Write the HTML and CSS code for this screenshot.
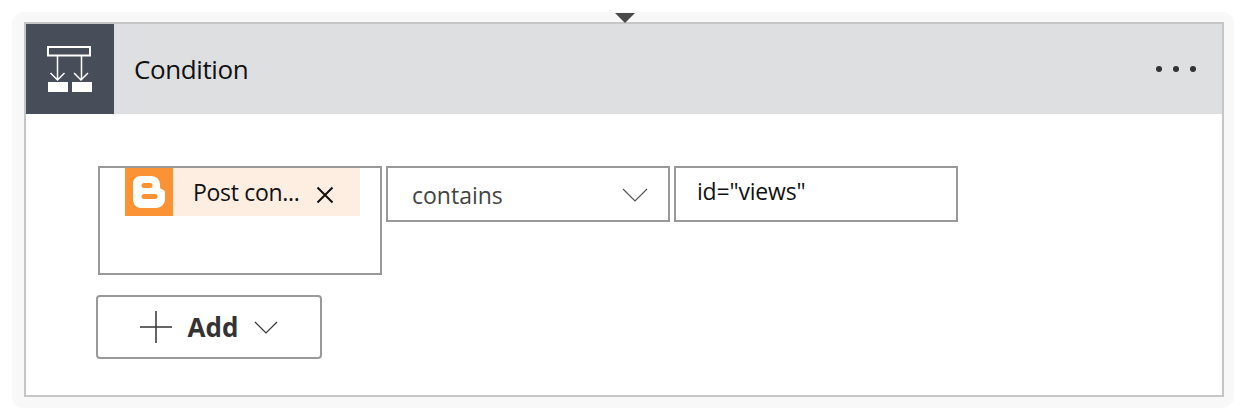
FILE: index.html
```html
<!DOCTYPE html>
<html lang="en">
<head>
  <title>Condition</title>
  <meta charset="utf-8">
  <link rel="stylesheet" href="styles.css">
</head>
<body>
  <div class="shell">
    <svg class="notch" width="22" height="10" viewBox="0 0 22 10"><path d="M0 0h20L10 10z" fill="#4a4a4a"/></svg>
    <section class="card">
      <header class="card-header">
        <div class="card-icon">
          <svg width="46" height="46" viewBox="0 0 46 46" fill="none" stroke="#fff" stroke-width="1.5">
            <rect x="1" y="1" width="42" height="8.5" stroke-width="2"/>
            <path d="M10.5 10v24M3.5 27l7 7 7-7M34.500 10v24M27 27l7 7 7-7"/>
            <path d="M1 36h20v10H1zM25 36h20v10H25z" fill="#fff" stroke="none"/>
          </svg>
        </div>
        <h2 class="card-title">Condition</h2>
        <div class="card-menu"><i></i><i></i><i></i></div>
      </header>
      <div class="card-body">
        <div class="condition">
          <div class="field field-token">
            <div class="token">
              <span class="token-icon">
                <svg width="34" height="34" viewBox="0 0 34 34">
                  <path d="M9 1h10c5.500 0 9 3.500 9 9v2c0 1.500 1 2 2.500 2.500 2 .5 2.500 1.500 2.500 3.500v6c0 5-4 9-9 9H9c-5 0-8-4-8-9V9c0-5 3-8 8-8z" fill="#fff"/>
                  <rect x="9.500" y="8" width="11" height="5" rx="2.500" fill="#fb9334"/>
                  <rect x="9.500" y="19" width="16" height="5" rx="2.500" fill="#fb9334"/>
                </svg>
              </span>
              <span class="token-label">Post con...</span>
              <svg class="token-close" width="18" height="18" viewBox="0 0 18 18"><path d="M1.500 1.500l15 15M16.500 1.500l-15 15" stroke="#111" stroke-width="2" fill="none"/></svg>
            </div>
          </div>
          <div class="field field-select">
            <span>contains</span>
            <svg width="26" height="14" viewBox="0 0 26 14"><path d="M1 1l12 12L25 1" stroke="#555" stroke-width="1.200" fill="none"/></svg>
          </div>
          <div class="field field-value">id="views"</div>
        </div>
        <button class="add-button">
          <svg width="32" height="32" viewBox="0 0 32 32"><path d="M16 0v32M0 16h32" stroke="#333" stroke-width="1.500"/></svg>
          <span>Add</span>
          <svg width="24" height="13" viewBox="0 0 24 13"><path d="M1 1l11 11L23 1" stroke="#333" stroke-width="1.200" fill="none"/></svg>
        </button>
      </div>
    </section>
  </div>
</body>
</html>
```

FILE: styles.css
```css
*, *::before, *::after {
  margin: 0;
  padding: 0;
  box-sizing: border-box;
}

html {
  font-size: 24px;
}

body {
  padding: 12px;
  background-color: #FFFFFF;
  color: #111111;
  font-family: "Open Sans", sans-serif;
}

.shell {
  position: relative;
  width: 1222px;
  height: 396px;
  padding: 10px 10px 10px 12px;
  border-radius: 12px;
  background-color: #F8F8F8;
}

.notch {
  position: absolute;
  top: 1px;
  left: 603px;
  z-index: 1;
}

.card {
  height: 375px;
  border: 2px solid #C6C6C6;
  background-color: #FFFFFF;
}

.card-header {
  display: flex;
  align-items: center;
  height: 90px;
  background-color: #DEDFE1;
}

.card-icon {
  display: flex;
  justify-content: center;
  align-items: center;
  width: 88px;
  height: 90px;
  background-color: #474E59;
}

.card-title {
  flex: 1;
  padding-left: 20px;
  font-size: 26px;
  font-weight: 400;
  letter-spacing: -0.4px;
}

.card-menu {
  display: flex;
  gap: 11px;
  padding-right: 26px;
}

.card-menu i {
  width: 6px;
  height: 6px;
  border-radius: 50%;
  background-color: #333333;
}

.card-body {
  padding: 52px 0 0 70px;
}

.condition {
  display: flex;
  align-items: flex-start;
  gap: 4px;
  margin-left: 2px;
}

.field {
  width: 284px;
  height: 56px;
  border: 2px solid #999999;
  background-color: #FFFFFF;
}

.field-token {
  height: 109px;
  padding-left: 25px;
}

.token {
  display: flex;
  align-items: center;
  width: 235px;
  height: 48px;
  background-color: #FEEEE2;
}

.token-icon {
  display: flex;
  justify-content: center;
  align-items: center;
  width: 48px;
  height: 48px;
  background-color: #FB9334;
}

.token-label {
  padding-left: 20px;
  font-size: 23px;
  letter-spacing: -0.3px;
  white-space: nowrap;
}

.token-close {
  margin-left: 16px;
  margin-top: 6px;
}

.field-select {
  display: flex;
  justify-content: space-between;
  align-items: center;
  padding: 2px 20px 0 24px;
  color: #444444;
  font-size: 23px;
}

.field-value {
  padding: 7px 0 0 21px;
  font-size: 23px;
  letter-spacing: -0.2px;
}

.add-button {
  display: flex;
  justify-content: center;
  align-items: center;
  gap: 16px;
  width: 226px;
  height: 64px;
  margin-top: 20px;
  border: 2px solid #999999;
  border-radius: 4px;
  background-color: #FFFFFF;
  color: #333333;
  font-family: inherit;
  font-size: 26px;
  font-weight: 700;
}
```
